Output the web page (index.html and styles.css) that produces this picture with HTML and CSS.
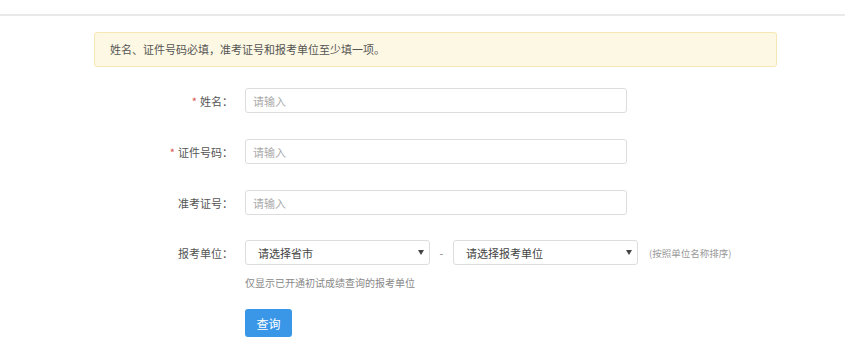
FILE: index.html
```html
<!DOCTYPE html>
<html lang="zh-CN">

<head>
  <meta charset="UTF-8">
  <title>成绩查询</title>
  <link rel="stylesheet" href="styles.css">
</head>

<body>
  <div class="header"></div>

  <div class="main">
    <div class="alert">姓名、证件号码必填，准考证号和报考单位至少填一项。</div>

    <div class="form">
      <div class="form-row">
        <label class="form-label"><span class="req">*</span>姓名：</label>
        <input class="form-input" type="text" placeholder="请输入">
      </div>

      <div class="form-row">
        <label class="form-label"><span class="req">*</span>证件号码：</label>
        <input class="form-input" type="text" placeholder="请输入">
      </div>

      <div class="form-row">
        <label class="form-label">准考证号：</label>
        <input class="form-input" type="text" placeholder="请输入">
      </div>

      <div class="form-row">
        <label class="form-label">报考单位：</label>
        <div class="select">
          <span>请选择省市</span>
          <svg width="6" height="5" viewBox="0 0 6 5"><path d="M0 0h6L3 5z" fill="#444"/></svg>
        </div>
        <span class="dash">-</span>
        <div class="select">
          <span>请选择报考单位</span>
          <svg width="6" height="5" viewBox="0 0 6 5"><path d="M0 0h6L3 5z" fill="#444"/></svg>
        </div>
        <span class="sort-hint">(按照单位名称排序)</span>
      </div>

      <div class="help">仅显示已开通初试成绩查询的报考单位</div>

      <div class="actions">
        <button class="btn" type="button">查询</button>
      </div>
    </div>
  </div>
</body>

</html>
```

FILE: styles.css
```css
body {
  margin: 0;
  padding: 0;
  font-family: "Noto Sans CJK SC", "Noto Sans", sans-serif;
  font-size: 11px;
  color: #555;
  background: #fff;
}

.header {
  height: 14px;
  border-bottom: 2px solid #e9e9e9;
}

.main {
  width: 683px;
  margin: 16px 0 0 94px;
}

.alert {
  box-sizing: border-box;
  height: 35px;
  line-height: 33px;
  padding: 0 15px;
  background: #fdf8e3;
  border: 1px solid #f7e7b5;
  border-radius: 3px;
  color: #555;
  font-size: 11px;
}

.form {
  margin-top: 21px;
}

.form-row {
  display: flex;
  align-items: center;
  height: 25px;
  margin-bottom: 26px;
}

.form-row:nth-child(3) {
  margin-bottom: 25px;
}

.form-label {
  width: 139px;
  text-align: right;
  color: #555;
  font-size: 11px;
  flex-shrink: 0;
}

.req {
  color: #d9534f;
  margin-right: 3px;
}

.form-input {
  box-sizing: border-box;
  width: 382px;
  height: 25px;
  margin-left: 12px;
  padding: 0 7px;
  border: 1px solid #ddd;
  border-radius: 3px;
  font-family: inherit;
  font-size: 11px;
  color: #333;
  outline: none;
}

.form-input::placeholder {
  color: #aaa;
}

.select {
  box-sizing: border-box;
  width: 185px;
  height: 25px;
  padding: 0 5px 0 12px;
  border: 1px solid #ddd;
  border-radius: 3px;
  display: flex;
  align-items: center;
  justify-content: space-between;
  color: #444;
  font-size: 11px;
}

.form-row .select:first-of-type {
  margin-left: 12px;
}

.dash {
  width: 23px;
  text-align: center;
  color: #888;
}

.sort-hint {
  margin-left: 11px;
  color: #999;
  font-size: 9.5px;
}

.help {
  margin: -16px 0 0 151px;
  color: #888;
  font-size: 10px;
}

.actions {
  margin: 19px 0 0 151px;
}

.btn {
  width: 47px;
  height: 28px;
  border: none;
  border-radius: 3px;
  background: #3a97e8;
  color: #fff;
  font-family: inherit;
  font-size: 12px;
  cursor: pointer;
}
```
